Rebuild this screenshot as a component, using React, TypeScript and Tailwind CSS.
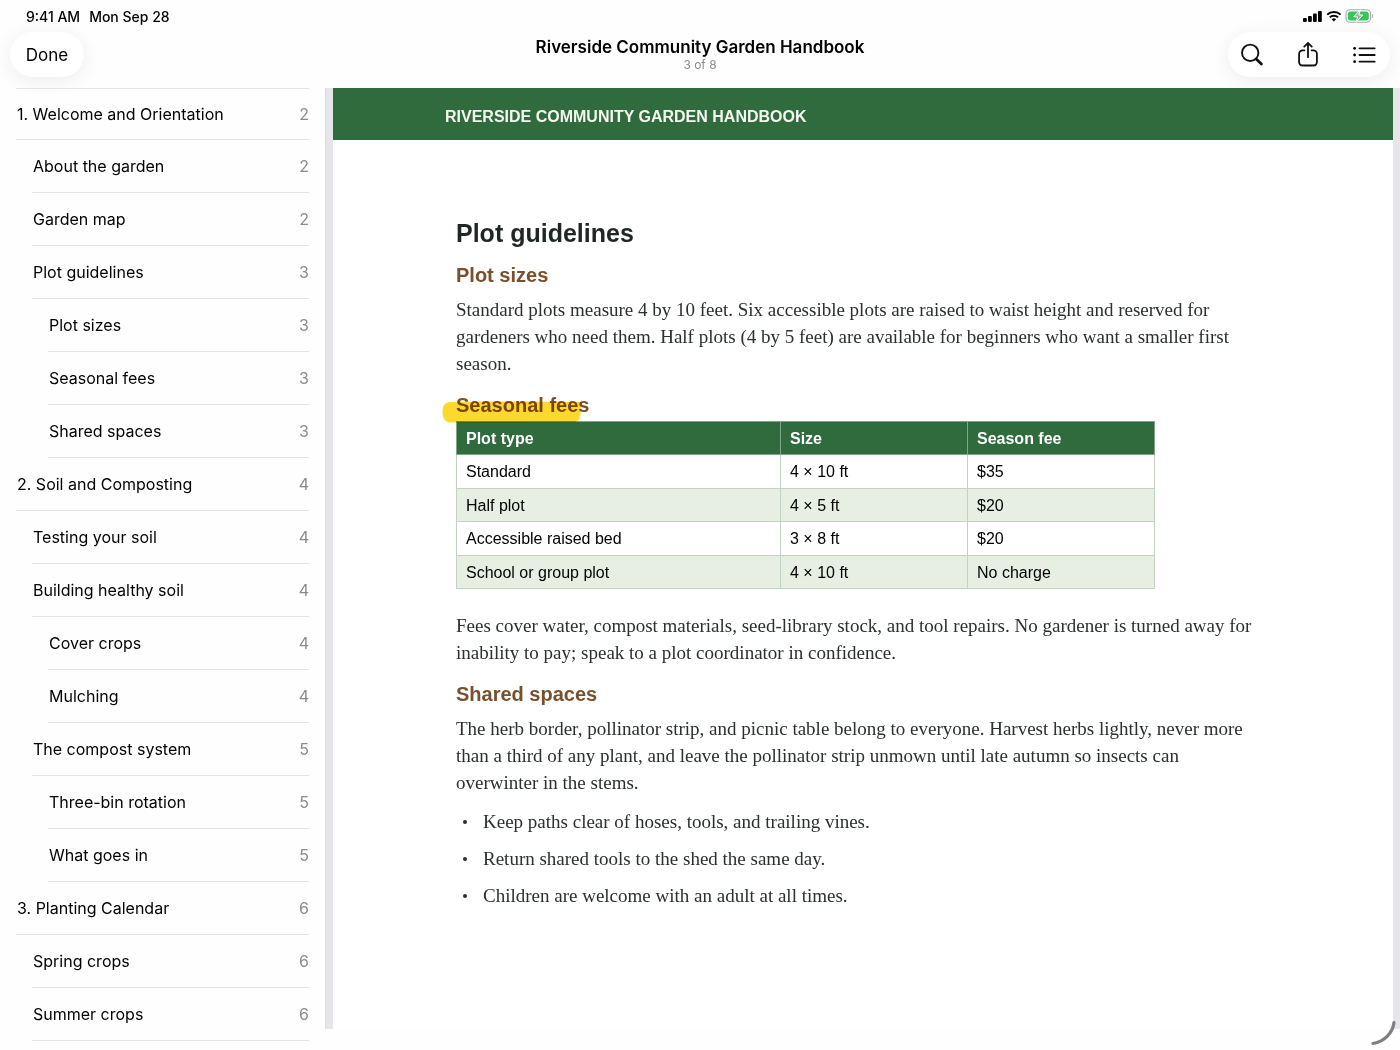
import clsx from "clsx"

type OutlineItem = {
    title: string
    page: number
    level: 0 | 1 | 2
}

const outline: OutlineItem[] = [
    { title: "1. Welcome and Orientation", page: 2, level: 0 },
    { title: "About the garden", page: 2, level: 1 },
    { title: "Garden map", page: 2, level: 1 },
    { title: "Plot guidelines", page: 3, level: 1 },
    { title: "Plot sizes", page: 3, level: 2 },
    { title: "Seasonal fees", page: 3, level: 2 },
    { title: "Shared spaces", page: 3, level: 2 },
    { title: "2. Soil and Composting", page: 4, level: 0 },
    { title: "Testing your soil", page: 4, level: 1 },
    { title: "Building healthy soil", page: 4, level: 1 },
    { title: "Cover crops", page: 4, level: 2 },
    { title: "Mulching", page: 4, level: 2 },
    { title: "The compost system", page: 5, level: 1 },
    { title: "Three-bin rotation", page: 5, level: 2 },
    { title: "What goes in", page: 5, level: 2 },
    { title: "3. Planting Calendar", page: 6, level: 0 },
    { title: "Spring crops", page: 6, level: 1 },
    { title: "Summer crops", page: 6, level: 1 },
]

const fees = [
    { type: "Standard", size: "4 × 10 ft", fee: "$35" },
    { type: "Half plot", size: "4 × 5 ft", fee: "$20" },
    { type: "Accessible raised bed", size: "3 × 8 ft", fee: "$20" },
    { type: "School or group plot", size: "4 × 10 ft", fee: "No charge" },
]

const rules = [
    "Keep paths clear of hoses, tools, and trailing vines.",
    "Return shared tools to the shed the same day.",
    "Children are welcome with an adult at all times.",
]

const indent = ["ml-4", "ml-8", "ml-12"]

const StatusIcons = () => (
    <svg width="72" height="14" viewBox="0 0 72 14" aria-hidden="true">
        <rect x="0" y="9" width="3.8" height="4" rx="1" />
        <rect x="5" y="7" width="3.8" height="6" rx="1" />
        <rect x="10" y="4.5" width="3.8" height="8.5" rx="1" />
        <rect x="15" y="2" width="3.8" height="11" rx="1" />
        <g fill="none" stroke="#000" strokeWidth="2">
            <path d="M24.2 5.6a9.6 9.6 0 0 1 13.4 0" />
            <path d="M26.8 8.3a5.9 5.9 0 0 1 8.2 0" />
        </g>
        <path d="M30.9 12.6l-2.2-2.3a3.2 3.2 0 0 1 4.4 0z" />
        <rect x="43" y="0.7" width="24.6" height="12.6" rx="4.2" fill="none" stroke="#a9a9ab" strokeWidth="1.1" />
        <rect x="44.8" y="2.5" width="21" height="9" rx="2.7" fill="#34c759" />
        <path d="M69 5v4.2c1.7-.6 1.7-3.6 0-4.2z" fill="#a9a9ab" />
        <path d="M57.3 0.8l-6.6 7h4l-1.6 5.4 6.7-7.2h-4.1z" fill="#a9a9ab" stroke="#fff" strokeWidth="1" />
    </svg>
)

const SearchIcon = () => (
    <svg width="24" height="24" viewBox="0 0 24 24" fill="none" stroke="#111" strokeLinecap="round" aria-hidden="true">
        <circle cx="10.2" cy="9.8" r="8.2" strokeWidth="1.9" />
        <path d="M16.2 15.9l5.2 5.1" strokeWidth="2.8" />
    </svg>
)

const ShareIcon = () => (
    <svg width="24" height="28" viewBox="0 0 24 28" fill="none" stroke="#111" strokeWidth="1.8" strokeLinecap="round" strokeLinejoin="round" aria-hidden="true">
        <path d="M8.4 9.3H6.5a3.4 3.4 0 0 0-3.4 3.4v8.4a3.4 3.4 0 0 0 3.4 3.4h11a3.4 3.4 0 0 0 3.4-3.4v-8.4a3.4 3.4 0 0 0-3.4-3.4h-1.9" />
        <path d="M12 16.2V2M8.3 5.6L12 1.9l3.7 3.7" />
    </svg>
)

const ListIcon = () => (
    <svg width="24" height="18" viewBox="0 0 24 18" aria-hidden="true">
        <path d="M7.5 2.3h15.2M7.5 9h15.2M7.5 15.7h15.2" stroke="#111" strokeWidth="1.8" strokeLinecap="round" />
        <circle cx="2.6" cy="2.3" r="1.4" />
        <circle cx="2.6" cy="9" r="1.4" />
        <circle cx="2.6" cy="15.7" r="1.4" />
    </svg>
)

const Header = () => (
    <header className="h-[88px]">
        <div className="flex h-8 items-center justify-between pl-[26px] pr-[25px] text-[14px] font-medium">
            <div className="flex gap-[9px]">
                <span>9:41 AM</span>
                <span>Mon Sep 28</span>
            </div>
            <StatusIcons />
        </div>
        <div className="grid grid-cols-[1fr_auto_1fr] items-center px-[10px]">
            <button className="h-[45px] w-[74px] justify-self-start rounded-full bg-white pt-[2px] text-[17px] shadow-[0_4px_20px_rgba(0,0,0,0.07)]">Done</button>
            <div className="pt-px text-center">
                <h1 className="text-[17px] leading-5 font-semibold">Riverside Community Garden Handbook</h1>
                <p className="text-[12px] leading-4 text-[#8a8a8e]">3 of 8</p>
            </div>
            <div className="flex h-[45px] w-[162px] items-center justify-between justify-self-end rounded-full bg-white pr-[14px] pl-3 shadow-[0_4px_20px_rgba(0,0,0,0.07)]">
                <button aria-label="Search"><SearchIcon /></button>
                <button aria-label="Share"><ShareIcon /></button>
                <button aria-label="Table of contents"><ListIcon /></button>
            </div>
        </div>
    </header>
)

const Sidebar = () => (
    <nav aria-label="Table of contents" className="w-[325px] shrink-0 pr-4 text-[16px]">
        <ul>
            {outline.map((item, i) => (
                <li
                    key={item.title}
                    className={clsx("border-b border-[#e3e3e5]", i === 0 ? "h-[52px] border-t" : "h-[53px]", indent[item.level])}
                >
                    <a href="#page" className="flex h-full items-center justify-between pl-px">
                        <span>{item.title}</span>
                        <span className="text-[#8a8a8e]">{item.page}</span>
                    </a>
                </li>
            ))}
        </ul>
    </nav>
)

const SubHeading = ({ children }: { children: string }) => (
    <h3 className="font-['Liberation_Sans',Arial,sans-serif] text-[20px] leading-6 font-bold text-[#7a4f2b]">{children}</h3>
)

const FeeTable = () => (
    <table className="mt-1 h-[168px] w-[699px] max-w-full table-fixed border-collapse border border-[#c3d3c3] text-left font-['Liberation_Sans',Arial,sans-serif] text-[16px] leading-5 text-black">
        <colgroup>
            <col />
            <col className="w-[187px]" />
            <col className="w-[187px]" />
        </colgroup>
        <thead>
            <tr className="h-[33px] bg-[#2f6b3c] text-white">
                <th className="border border-[#7fa587] px-[9px] pt-[2px]">Plot type</th>
                <th className="border border-[#7fa587] px-[9px] pt-[2px]">Size</th>
                <th className="border border-[#7fa587] px-[9px] pt-[2px]">Season fee</th>
            </tr>
        </thead>
        <tbody>
            {fees.map((row) => (
                <tr key={row.type} className="even:bg-[#e7efe2]">
                    <td className="border border-[#c3d3c3] px-[9px] pt-[2px]">{row.type}</td>
                    <td className="border border-[#c3d3c3] px-[9px] pt-[2px]">{row.size}</td>
                    <td className="border border-[#c3d3c3] px-[9px] pt-[2px]">{row.fee}</td>
                </tr>
            ))}
        </tbody>
    </table>
)

const Page = () => (
    <article id="page" className="min-h-[941px] bg-white font-['Liberation_Serif','Times_New_Roman',serif] text-[19px] leading-[27px] text-[#2b302d]">
        <div className="flex h-[52px] items-center bg-[#2f6b3c] pt-1 pl-28 font-['Liberation_Sans',Arial,sans-serif] text-[16px] font-bold text-[#f4f8ef]">
            RIVERSIDE COMMUNITY GARDEN HANDBOOK
        </div>
        <div className="pt-[77px] pr-[135px] pl-[123px]">
            <h2 className="font-['Liberation_Sans',Arial,sans-serif] text-[25px] leading-8 font-bold text-[#1f2623]">Plot guidelines</h2>
            <div className="mt-[14px]">
                <SubHeading>Plot sizes</SubHeading>
                <p className="mt-[9px]">
                    Standard plots measure 4 by 10 feet. Six accessible plots are raised to waist height and reserved for
                    gardeners who need them. Half plots (4 by 5 feet) are available for beginners who want a smaller first
                    season.
                </p>
            </div>
            <div className="mt-4">
                <div className="relative w-fit">
                    <SubHeading>Seasonal fees</SubHeading>
                    {/* highlighter stroke, blended so the text below stays readable */}
                    <svg className="absolute top-2 -left-[14px] mix-blend-multiply" width="140" height="22" viewBox="0 0 140 22" aria-hidden="true">
                        <path d="M8 1C28 0 112 .5 139.5 1c-.2 7.5-1 15-2.5 18l-4 2C97 21.5 50 21.5 9 21.6 3 21.6.5 17 .5 11S2.5 1.5 8 1z" fill="#ffd82e" />
                    </svg>
                </div>
                <FeeTable />
                <p className="mt-[23px]">
                    Fees cover water, compost materials, seed-library stock, and tool repairs. No gardener is turned away for
                    inability to pay; speak to a plot coordinator in confidence.
                </p>
            </div>
            <div className="mt-4">
                <SubHeading>Shared spaces</SubHeading>
                <p className="mt-[9px]">
                    The herb border, pollinator strip, and picnic table belong to everyone. Harvest herbs lightly, never more
                    than a third of any plant, and leave the pollinator strip unmown until late autumn so insects can
                    overwinter in the stems.
                </p>
                <ul className="mt-3 space-y-[10px]">
                    {rules.map((rule) => (
                        <li key={rule} className="flex items-center">
                            <span className="mr-4 ml-[7px] size-1 rounded-full bg-[#2b302d]" />
                            {rule}
                        </li>
                    ))}
                </ul>
            </div>
        </div>
    </article>
)

export default function App() {
    return (
        <div className="relative min-h-screen bg-[#fefefe] font-[Inter,'Helvetica_Neue',sans-serif] text-black">
            <Header />
            <div className="flex items-start">
                <Sidebar />
                <main className="min-w-0 flex-1 border-l border-[#dcdcdf] bg-[#e6e6ea] pr-[7px] pl-[7px]">
                    <Page />
                </main>
            </div>
            <svg className="absolute right-1 bottom-1" width="26" height="26" viewBox="0 0 26 26" aria-hidden="true">
                <path d="M24 2.5C22.5 13 15 21.5 3 23.5" fill="none" stroke="#808082" strokeWidth="3.2" strokeLinecap="round" />
            </svg>
        </div>
    )
}
